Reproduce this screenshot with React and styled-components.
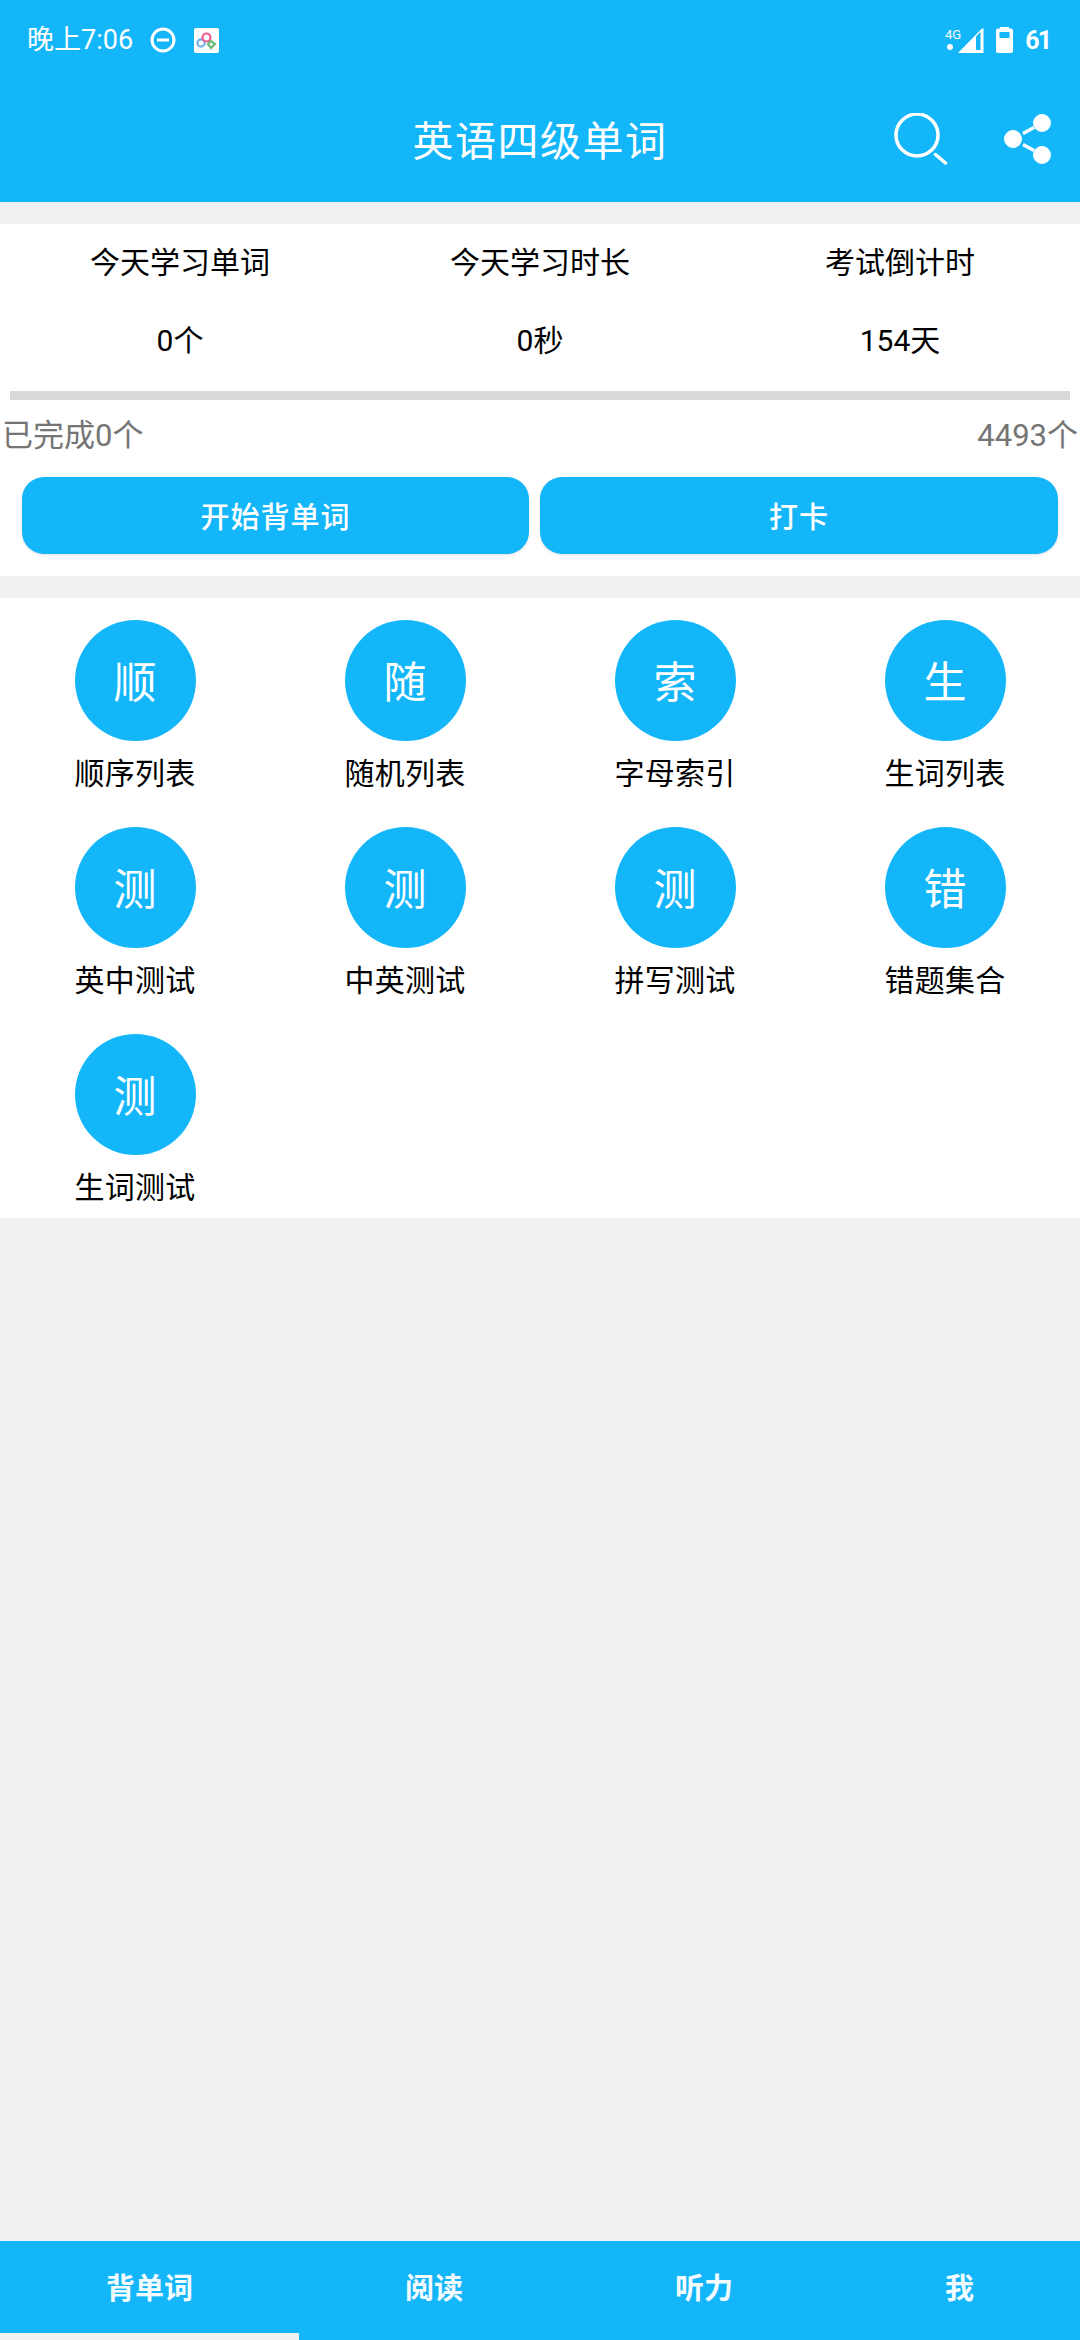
import styled, { createGlobalStyle } from "styled-components";

const BLUE = "#14b6fa";

const GlobalStyle = createGlobalStyle`
  html, body {
    margin: 0;
    padding: 0;
    background: #f1f1f2;
    font-family: "Roboto", "Noto Sans CJK SC", sans-serif;
  }
  * { box-sizing: border-box; }
`;

const Page = styled.div`
  width: 1080px;
  height: 2340px;
  display: flex;
  flex-direction: column;
  overflow: hidden;
`;

const Header = styled.header`
  height: 202px;
  flex-shrink: 0;
  background: ${BLUE};
  color: #fff;
  display: flex;
  flex-direction: column;
`;

const StatusBar = styled.div`
  height: 80px;
  display: flex;
  align-items: center;
  padding: 0 30px 0 27px;
`;

const StatusTime = styled.span`
  font-size: 27px;
  line-height: 80px;
  margin-right: 17px;
`;

const StatusRight = styled.div`
  margin-left: auto;
  display: flex;
  align-items: center;
  gap: 12px;
`;

const BatteryText = styled.span`
  font-size: 25px;
  font-weight: 700;
  letter-spacing: -2px;
`;

const AppLogo = styled.span`
  width: 25px;
  height: 25px;
  border-radius: 2px;
  background: #fff;
  margin-left: 18px;
  display: flex;
`;

const TitleBar = styled.div`
  flex: 1;
  display: flex;
  align-items: center;
  justify-content: center;
  position: relative;
  padding-bottom: 6px;
`;

const Title = styled.h1`
  margin: 0;
  font-size: 41px;
  font-weight: 400;
  letter-spacing: 1.5px;
`;

const TitleIcons = styled.div`
  position: absolute;
  top: 33px;
  right: 28px;
  display: flex;
  gap: 56px;
  align-items: center;
`;

const Section = styled.section`
  background: #fff;
  margin-top: 22px;
`;

const StatsRow = styled.div`
  display: grid;
  grid-template-columns: repeat(3, 1fr);
  height: 167px;
  padding-top: 17px;
  text-align: center;
`;

const Stat = styled.div`
  display: flex;
  flex-direction: column;
  gap: 34px;
  font-size: 30px;
  line-height: 44px;
  color: #000;
`;

const Progress = styled.div`
  height: 9px;
  margin: 0 10px;
  background: #d9d9d9;
`;

const ProgressLabels = styled.div`
  display: flex;
  justify-content: space-between;
  padding: 0 2px 12px;
  height: 77px;
  align-items: center;
  font-size: 31px;
  color: #757575;
`;

const Buttons = styled.div`
  display: flex;
  gap: 11px;
  padding: 0 22px 22px 22px;
`;

const ActionButton = styled.button`
  flex: ${(p) => p.$grow};
  height: 77px;
  border: none;
  border-radius: 22px;
  background: ${BLUE};
  color: #fff;
  font-family: inherit;
  font-size: 29px;
  font-weight: 500;
  letter-spacing: 1px;
  padding: 0 0 2px;
  box-shadow: 0 1px 3px rgba(0, 0, 0, 0.12);
`;

const MenuGrid = styled.div`
  display: grid;
  grid-template-columns: repeat(4, 270px);
  grid-auto-rows: 207px;
  padding-top: 22px;
  height: 620px;
`;

const MenuItem = styled.div`
  display: flex;
  flex-direction: column;
  align-items: center;
`;

const Circle = styled.div`
  width: 121px;
  height: 121px;
  border-radius: 50%;
  background: ${BLUE};
  color: #fff;
  font-size: 43px;
  padding-bottom: 4px;
  display: flex;
  align-items: center;
  justify-content: center;
`;

const MenuLabel = styled.div`
  margin-top: 11px;
  font-size: 30px;
  line-height: 44px;
  letter-spacing: 0.3px;
  color: #000;
`;

const TabBar = styled.nav`
  margin-top: auto;
  height: 99px;
  flex-shrink: 0;
  background: ${BLUE};
  display: grid;
  grid-template-columns: 299px 270px 270px 241px;
`;

const Tab = styled.div`
  position: relative;
  display: flex;
  align-items: center;
  justify-content: center;
  color: #f4fbff;
  font-size: 29px;
  font-weight: 700;
  padding-bottom: 10px;

  ${(p) =>
    p.$active &&
    `&::after {
      content: "";
      position: absolute;
      left: 0;
      right: 0;
      bottom: 0;
      height: 7px;
      background: #f1f1f2;
    }`}
`;

const stats = [
  ["今天学习单词", "0个"],
  ["今天学习时长", "0秒"],
  ["考试倒计时", "154天"],
];

const menu = [
  ["顺", "顺序列表"],
  ["随", "随机列表"],
  ["索", "字母索引"],
  ["生", "生词列表"],
  ["测", "英中测试"],
  ["测", "中英测试"],
  ["测", "拼写测试"],
  ["错", "错题集合"],
  ["测", "生词测试"],
];

const tabs = ["背单词", "阅读", "听力", "我"];

function DndIcon() {
  return (
    <svg width="26" height="26" viewBox="0 0 26 26" fill="none" stroke="#fff" strokeWidth="3">
      <circle cx="13" cy="13" r="11" />
      <path d="M7 13h12" />
    </svg>
  );
}

function LogoIcon() {
  return (
    <svg width="25" height="25" viewBox="0 0 25 25" fill="none" strokeWidth="2.2">
      <circle cx="7" cy="15" r="3.6" stroke="#6db3e8" />
      <circle cx="12.5" cy="9.5" r="4" stroke="#ef5b8c" />
      <path d="M14 16l3-3 4 3-4 4z" stroke="#6dbb7a" />
    </svg>
  );
}

function SignalIcon() {
  return (
    <svg width="39" height="27" viewBox="0 0 39 27" fill="#fff">
      <text x="0" y="12" fontSize="13" fontFamily="Roboto" fill="#fff">4G</text>
      <circle cx="5" cy="20" r="3" />
      <path d="M13 26L36 2.5 38.5 1v25z" />
      <path d="M31 9.5L35.5 5v18H31z" fill={BLUE} />
    </svg>
  );
}

function BatteryIcon() {
  return (
    <svg width="17" height="26" viewBox="0 0 17 26" fill="#fff">
      <rect x="4" y="0" width="9" height="3" />
      <rect x="0" y="1.5" width="17" height="24.5" rx="2" />
      <rect x="3.5" y="5" width="10" height="6" fill={BLUE} />
    </svg>
  );
}

function SearchIcon() {
  return (
    <svg width="54" height="52" viewBox="0 0 54 52" fill="none" stroke="#fff" strokeLinecap="round">
      <circle cx="23" cy="22" r="21" strokeWidth="3.5" />
      <path d="M41.5 41.5l10 8.5" strokeWidth="3.5" />
    </svg>
  );
}

function ShareIcon() {
  return (
    <svg width="48" height="50" viewBox="0 0 48 50" fill="#fff" stroke="#fff">
      <circle cx="9" cy="25" r="8.5" />
      <circle cx="38" cy="9" r="8.5" />
      <circle cx="38" cy="41" r="8.5" />
      <path d="M19 19.5L30 13.5M19 30.5L30 36.5" strokeWidth="3.5" />
    </svg>
  );
}

export default function App() {
  return (
    <Page>
      <GlobalStyle />
      <Header>
        <StatusBar>
          <StatusTime>晚上7:06</StatusTime>
          <DndIcon />
          <AppLogo>
            <LogoIcon />
          </AppLogo>
          <StatusRight>
            <SignalIcon />
            <BatteryIcon />
            <BatteryText>61</BatteryText>
          </StatusRight>
        </StatusBar>
        <TitleBar>
          <Title>英语四级单词</Title>
          <TitleIcons>
            <SearchIcon />
            <ShareIcon />
          </TitleIcons>
        </TitleBar>
      </Header>

      <Section>
        <StatsRow>
          {stats.map(([label, value]) => (
            <Stat key={label}>
              <div>{label}</div>
              <div>{value}</div>
            </Stat>
          ))}
        </StatsRow>
        <Progress />
        <ProgressLabels>
          <span>已完成0个</span>
          <span>4493个</span>
        </ProgressLabels>
        <Buttons>
          <ActionButton $grow="507">开始背单词</ActionButton>
          <ActionButton $grow="518">打卡</ActionButton>
        </Buttons>
      </Section>

      <Section>
        <MenuGrid>
          {menu.map(([char, label]) => (
            <MenuItem key={label}>
              <Circle>{char}</Circle>
              <MenuLabel>{label}</MenuLabel>
            </MenuItem>
          ))}
        </MenuGrid>
      </Section>

      <TabBar>
        {tabs.map((tab, i) => (
          <Tab key={tab} $active={i === 0}>
            {tab}
          </Tab>
        ))}
      </TabBar>
    </Page>
  );
}
